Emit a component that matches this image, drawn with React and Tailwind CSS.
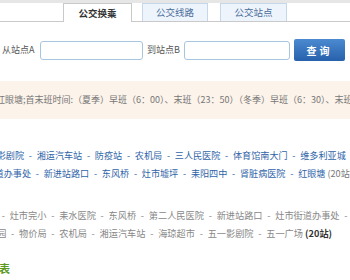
import React from 'react'

const lineA = ['影剧院', '湘运汽车站', '防疫站', '农机局', '三人民医院', '体育馆南大门', '维多利亚城']
const lineB = ['街道办事处', '新进站路口', '东风桥', '灶市墟坪', '耒阳四中', '肾脏病医院', '红眼塘']
const lineC = ['灶市完小', '耒水医院', '东风桥', '第二人民医院', '新进站路口', '灶市街道办事处']
const lineD = ['公园', '物价局', '农机局', '湘运汽车站', '海琼超市', '五一影剧院', '五一广场']

function Sep() {
  return <span className="inline-block w-[12.7px] text-center">-</span>
}

function Stops({ items }) {
  return items.map((name, i) => (
    <React.Fragment key={i}>
      {i > 0 && <Sep />}
      <span>{name}</span>
    </React.Fragment>
  ))
}

export default function App() {
  return (
    <div className="w-[350px] h-[280px] overflow-hidden bg-white font-['Noto_Sans_CJK_SC','Noto_Sans',sans-serif]">
      {/* top strip */}
      <div className="h-[3px] bg-[#e6e6e6]" />

      {/* tabs */}
      <div className="flex h-[19px] border-b border-[#c9c9c9]">
        <div className="ml-[63px] w-[69px] h-[19px] bg-white border border-b-0 border-[#c9c9c9] flex items-center justify-center text-[9.5px] font-bold text-[#333]">
          公交换乘
        </div>
        <div className="ml-[10px] w-[66px] h-[18px] bg-[#eef4fb] border border-b-0 border-[#c6d7e9] flex items-center justify-center text-[9.5px] text-[#4a6d9c]">
          公交线路
        </div>
        <div className="ml-[12px] w-[67px] h-[18px] bg-[#eef4fb] border border-b-0 border-[#c6d7e9] flex items-center justify-center text-[9.5px] text-[#4a6d9c]">
          公交站点
        </div>
      </div>

      {/* search */}
      <div className="mt-[17px] flex items-center h-[22px] text-[9px] text-[#555]">
        <span className="ml-[2px] w-[38px]">从站点A</span>
        <input type="text" className="w-[103px] h-[19px] bg-white border border-[#a8c5df] rounded-[3px] outline-none" />
        <span className="ml-[4px] w-[37px]">到站点B</span>
        <input type="text" className="w-[106px] h-[19px] bg-white border border-[#a8c5df] rounded-[3px] outline-none" />
        <button className="ml-[4px] w-[51px] h-[22px] rounded-[2px] bg-gradient-to-b from-[#4b8ad1] to-[#2761ab] text-white text-[10px] font-bold tracking-[3px]">
          查询
        </button>
      </div>

      {/* schedule band */}
      <div className="mt-[20px] h-[38px] bg-[#fcf3ea] flex items-center overflow-hidden whitespace-nowrap">
        <span className="-ml-[4px] text-[9px] text-[#777]">
          红眼塘;首末班时间:（夏季）早班（6：00）、末班（23：50）（冬季）早班（6：30）、末班（23：30）
        </span>
      </div>

      {/* up line */}
      <div className="mt-[27px] text-[9.1px] leading-[18px] text-[#2f64a8] whitespace-nowrap overflow-hidden">
        <div className="-ml-[21.5px]">
          <span>五一</span>
          <Stops items={lineA} />
        </div>
        <div className="-ml-[14.5px]">
          <Stops items={lineB} />
          <span className="text-[#777]"> (20站)</span>
        </div>
      </div>

      {/* down line */}
      <div className="mt-[24px] text-[9.2px] leading-[18px] text-[#888] whitespace-nowrap overflow-hidden">
        <div className="-ml-[3px]">
          <Sep />
          <Stops items={lineC} />
          <Sep />
        </div>
        <div className="-ml-[12px]">
          <Stops items={lineD} />
          <span className="font-bold text-[#333]"> (20站)</span>
        </div>
      </div>

      {/* section title */}
      <div className="mt-[17px] leading-[18px] text-[11px] font-bold text-[#5c9a1f] whitespace-nowrap overflow-hidden">
        <span className="-ml-[1px]">表</span>
      </div>
    </div>
  )
}
